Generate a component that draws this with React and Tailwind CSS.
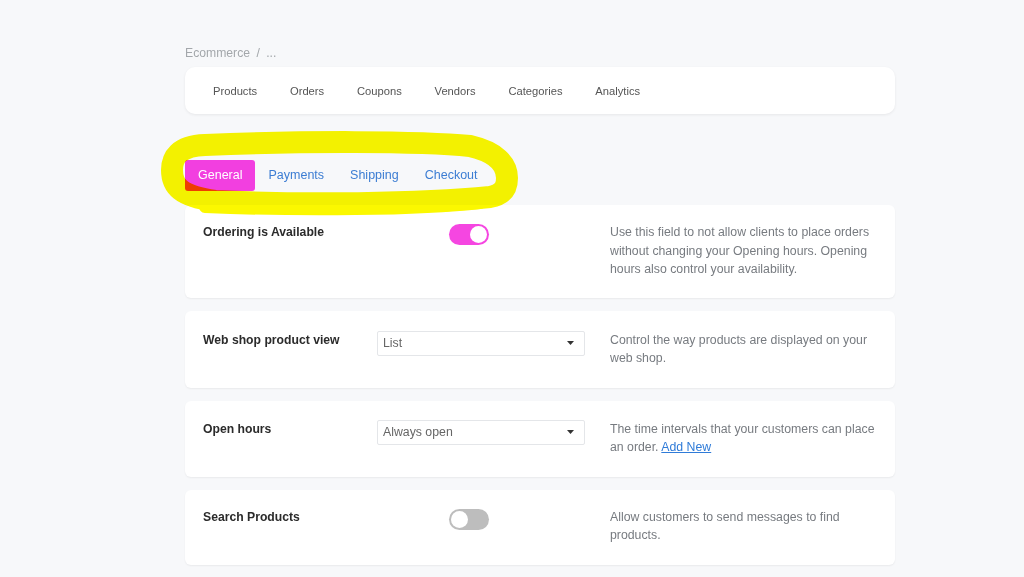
import React from "react";

const F = { fontFamily: '"Liberation Sans", Arial, sans-serif' };

function Toggle({ on }) {
  return (
    <div
      className={
        "relative w-[40px] h-[21px] rounded-full " +
        (on ? "bg-[#f546e1]" : "bg-[#bdbdbd]")
      }
    >
      <div
        className={
          "absolute top-[2px] w-[17px] h-[17px] rounded-full bg-white " +
          (on ? "right-[2px]" : "left-[2px]")
        }
      />
    </div>
  );
}

function Select({ value }) {
  return (
    <div className="w-[208px] h-[25px] border border-[#e4e6e9] rounded-[2px] bg-white flex items-center justify-between pl-[5px] pr-[10px]">
      <span className="text-[12.3px] text-[#666]">{value}</span>
      <svg width="7" height="4" viewBox="0 0 7 4">
        <path d="M0 0 L7 0 L3.5 4 Z" fill="#333" />
      </svg>
    </div>
  );
}

function Card({ label, control, desc, pt = "pt-[18px]", pb = "pb-[20px]" }) {
  return (
    <div
      className={
        "bg-white rounded-[6px] shadow-[0_1px_2px_rgba(0,0,0,0.06)] flex items-start pl-[18px] " +
        pt +
        " " +
        pb
      }
    >
      <div className="w-[174px] text-[12.2px] font-bold text-[#2b2b2b] leading-[18.5px]">
        {label}
      </div>
      <div className="w-[233px]">{control}</div>
      <div className="w-[265px] text-[12.3px] text-[#777b80] leading-[18.5px]">
        {desc}
      </div>
    </div>
  );
}

export default function App() {
  const nav = ["Products", "Orders", "Coupons", "Vendors", "Categories", "Analytics"];
  return (
    <div className="relative w-[1024px] h-[577px] overflow-hidden bg-[#f7f8fa]" style={F}>
      <div className="pl-[185px] pt-[45px] w-[895px]">
        <div className="text-[12.2px] text-[#a3a7ab] leading-[16px]">
          Ecommerce <span className="ml-[3px] mr-[3px]">/</span> ...
        </div>
        <div className="mt-[6px] h-[47px] bg-white rounded-[10px] shadow-[0_1px_3px_rgba(0,0,0,0.07)] flex items-center pl-[28px] gap-[32.8px] pt-[2px]">
          {nav.map((n) => (
            <span key={n} className="text-[11.2px] text-[#555]">
              {n}
            </span>
          ))}
        </div>
        <div className="mt-[46px] flex items-center h-[31px]">
          <div className="h-[31px] px-[13px] flex items-center bg-[#f23fe0] text-white rounded-[3px] text-[12.5px]">
            General
          </div>
          {["Payments", "Shipping", "Checkout"].map((t) => (
            <div key={t} className="h-[31px] px-[13px] flex items-center text-[#3c7dd3] text-[12.5px]">
              {t}
            </div>
          ))}
        </div>
        <div className="mt-[14px] flex flex-col gap-[13px]">
          <Card
            pt="pt-[18px]"
            pb="pb-[19px]"
            label="Ordering is Available"
            control={
              <div className="ml-[72px] mt-[1px]">
                <Toggle on />
              </div>
            }
            desc="Use this field to not allow clients to place orders without changing your Opening hours. Opening hours also control your availability."
          />
          <Card
            pt="pt-[20px]"
            pb="pb-[20px]"
            label="Web shop product view"
            control={<Select value="List" />}
            desc="Control the way products are displayed on your web shop."
          />
          <Card
            pt="pt-[19px]"
            pb="pb-[20px]"
            label="Open hours"
            control={<Select value="Always open" />}
            desc={
              <>
                The time intervals that your customers can place an order.{" "}
                <span className="text-[#2f7bd8] underline">Add New</span>
              </>
            }
          />
          <Card
            pt="pt-[18px]"
            pb="pb-[20px]"
            label="Search Products"
            control={
              <div className="ml-[72px] mt-[1px]">
                <Toggle />
              </div>
            }
            desc="Allow customers to send messages to find products."
          />
        </div>
      </div>
      <svg
        className="absolute top-0 left-0 pointer-events-none mix-blend-multiply"
        width="1024"
        height="577"
        viewBox="0 0 1024 577"
      >
        <path
          d="M470 146 C420 141, 300 141, 205 145 C178 146, 172 158, 172 170 C172 186, 180 196, 215 201 C300 205, 420 204, 490 197 C506 194, 507 184, 507 178 C507 164, 496 152, 470 146 Z"
          fill="none"
          stroke="#fbf800"
          strokeWidth="22"
          strokeLinejoin="round"
        />
        <path
          d="M205 207 C300 211, 420 210, 480 203"
          fill="none"
          stroke="#fbf800"
          strokeWidth="12"
          strokeLinecap="round"
        />
      </svg>
    </div>
  );
}
